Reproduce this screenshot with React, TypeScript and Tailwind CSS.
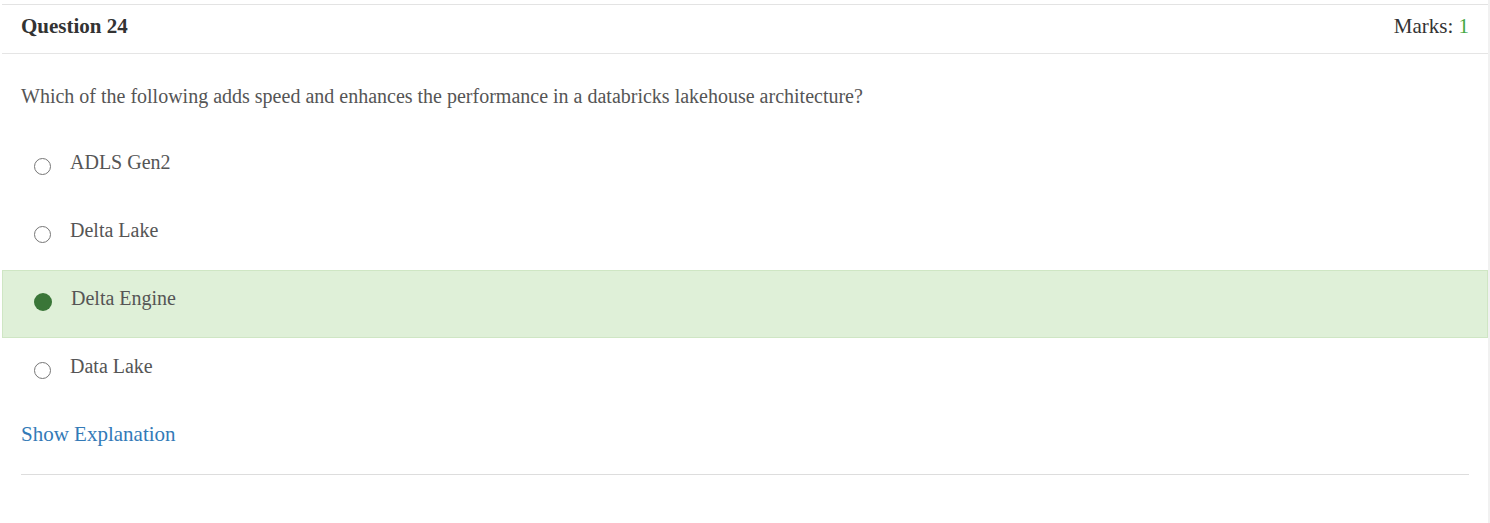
import React from 'react';

const options = ['ADLS Gen2', 'Delta Lake', 'Delta Engine', 'Data Lake'];
const selected = 2;

const Radio: React.FC<{ checked: boolean }> = ({ checked }) =>
  checked ? (
    <span className="mt-[9px] block h-[18px] w-[18px] shrink-0 rounded-full bg-[#3a7638]" />
  ) : (
    <span className="mt-[10px] block h-[17px] w-[17px] shrink-0 rounded-full border-[1.5px] border-[#767676] bg-white" />
  );

const App: React.FC = () => {
  return (
    <div className="flex min-h-[523px] w-full bg-white font-['Liberation_Serif',serif]">
      <div className="ml-[2px] mt-[4px] flex w-[1486px] flex-col border-t border-[#e3e3e3]">
        <div className="flex h-[49px] items-center justify-between border-b border-[#e5e5e5] px-[19px] pb-[4px]">
          <h3 className="text-[21px] font-bold text-[#333]">Question 24</h3>
          <span className="text-[21px] text-[#333]">
            Marks: <span className="text-[#45a845]">1</span>
          </span>
        </div>

        <p className="mt-[27px] px-[19px] text-[20px] leading-[30px] text-[#555]">
          Which of the following adds speed and enhances the performance in a databricks lakehouse architecture?
        </p>

        <div className="mt-[23px] flex flex-col">
          {options.map((o, i) => (
            <div
              key={o}
              className={
                i === selected
                  ? 'flex h-[68px] items-start gap-[19px] border border-[#cfe6c4] bg-[#dff0d8] pl-[31px] pt-[13px]'
                  : 'flex h-[68px] items-start gap-[19px] border border-transparent pl-[31px] pt-[13px]'
              }
            >
              <Radio checked={i === selected} />
              <span className="text-[20px] leading-[28px] text-[#555]">{o}</span>
            </div>
          ))}
        </div>

        <a href="#" className="mt-[13px] px-[19px] text-[21px] leading-[30px] text-[#337ab7]">
          Show Explanation
        </a>

        <hr className="mx-[19px] mt-[25px] border-[#dddddd]" />
      </div>
      <div className="w-[2px] bg-[#f1f1f1]" />
    </div>
  );
};

export default App;
